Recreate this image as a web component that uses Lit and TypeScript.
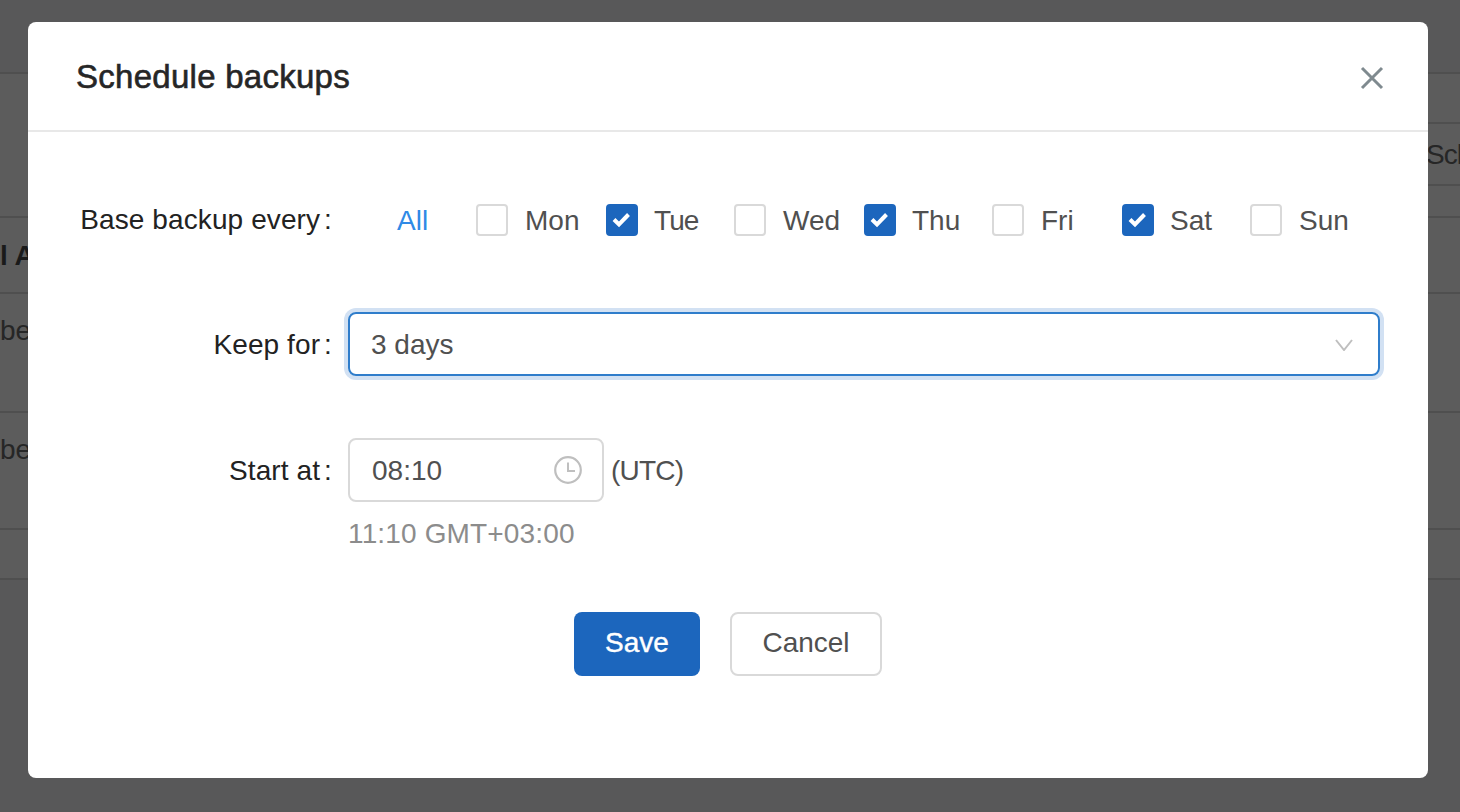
import { LitElement, html, css, svg } from "lit";
import { customElement } from "lit/decorators.js";

const DAYS: [string, boolean][] = [
  ["Mon", false], ["Tue", true], ["Wed", false], ["Thu", true],
  ["Fri", false], ["Sat", true], ["Sun", false],
];

@customElement("app-root")
export class AppRoot extends LitElement {
  static styles = css`
    :host {
      display: block;
      position: relative;
      width: 1460px;
      height: 812px;
      overflow: hidden;
      background: #585859;
      font-family: "Liberation Sans", Arial, sans-serif;
      color: #505050;
      font-size: 28px;
    }
    .page { display: flex; flex-direction: column; color: #262626; font-size: 28px; }
    .page > div { border-bottom: 2px solid #4f4f4f; background: #5c5c5c; box-sizing: border-box; overflow: hidden; white-space: nowrap; }
    .p0 { height: 74px; background: #585859 !important; }
    .page > .p1 { height: 112px; border-bottom: 0; display: flex; justify-content: flex-end; align-items: flex-end; }
    .sch { width: 38px; height: 64px; box-sizing: border-box; border-top: 2px solid #4f4f4f; border-bottom: 2px solid #4f4f4f; padding-left: 4px; letter-spacing: -1px; line-height: 62px; overflow: hidden; }
    .p2 { height: 32px; }
    .p3 { height: 76px; line-height: 76px; font-weight: 700; color: #1a1a1a; }
    .p4 { height: 119px; padding-top: 19px; line-height: 36px; }
    .p5 { height: 117px; padding-top: 19px; line-height: 36px; }
    .p6 { height: 50px; }
    .modal {
      position: absolute;
      left: 28px;
      top: 22px;
      width: 1400px;
      height: 756px;
      background: #fff;
      border-radius: 8px;
      display: flex;
      flex-direction: column;
    }
    .head {
      height: 110px;
      box-sizing: border-box;
      border-bottom: 2px solid #e8e8e8;
      padding: 0 42px 0 48px;
      display: flex;
      align-items: center;
      justify-content: space-between;
    }
    .title { font-size: 33px; font-weight: 400; letter-spacing: 0.27px; color: #262626; -webkit-text-stroke: 0.6px #262626; padding-top: 2px; }
    .close { width: 28px; height: 28px; display: block; margin-top: 4px; }
    .body { display: flex; flex-direction: column; padding-top: 64px; }
    .row { display: flex; align-items: center; }
    .label { width: 304px; flex: none; text-align: right; color: #222; white-space: nowrap; letter-spacing: 0.1px; }
    .low { padding-top: 2px; }
    .r1 { height: 48px; }
    .all { color: #2f8ae6; margin-left: 65px; width: 79px; padding-top: 2px; }
    .day { display: flex; align-items: center; }
    .box { width: 32px; height: 32px; box-sizing: border-box; border: 2px solid #d9d9d9; border-radius: 4px; background: #fff; display: block; }
    .box.on { background: #1c66bd; border-color: #1c66bd; }
    .day span { margin-left: 17px; padding-top: 2px; }
    .day.checked span { margin-left: 16px; }
    .day span.tight { letter-spacing: -0.9px; }
    .colon { margin-left: 4px; }
    .r2 { margin-top: 70px; height: 60px; }
    .select {
      margin-left: 16px;
      width: 1032px;
      height: 64px;
      box-sizing: border-box;
      border: 2px solid #2f7dcb;
      border-radius: 8px;
      box-shadow: 0 0 0 4px #d2e1f3;
      padding: 0 25px 0 21px;
      display: flex;
      align-items: center;
      justify-content: space-between;
    }
    .chev { width: 18px; height: 12px; display: block; padding-top: 1px; }
    .r3 { margin-top: 64px; height: 64px; }
    .time {
      margin-left: 16px;
      width: 256px;
      height: 64px;
      box-sizing: border-box;
      border: 2px solid #d9d9d9;
      border-radius: 8px;
      padding: 0 20px 0 22px;
      display: flex;
      align-items: center;
      justify-content: space-between;
    }
    .clock { width: 28px; height: 28px; display: block; }
    .utc { margin-left: 7px; letter-spacing: -0.8px; padding-top: 2px; }
    .hint { margin: 14px 0 0 320px; color: #8c8c8c; line-height: 36px; letter-spacing: 0.15px; }
    .actions { display: flex; justify-content: center; gap: 30px; margin-top: 60px; }
    .btn { height: 64px; box-sizing: border-box; border-radius: 8px; display: flex; align-items: center; justify-content: center; padding-bottom: 2px; }
    .save { width: 126px; background: #1c66bd; color: #fff; -webkit-text-stroke: 0.4px #fff; }
    .cancel { width: 152px; border: 2px solid #d9d9d9; background: #fff; }
  `;

  private box(on: boolean) {
    return html`<svg class="box ${on ? "on" : ""}" viewBox="0 0 28 28">${on
      ? svg`<path d="M6 13.5l5 5 9.5-10" fill="none" stroke="#fff" stroke-width="4"/>`
      : ""}</svg>`;
  }

  render() {
    return html`
      <div class="page">
        <div class="p0"></div>
        <div class="p1"><div class="sch">Sch</div></div>
        <div class="p2"></div>
        <div class="p3">l A</div>
        <div class="p4">be</div>
        <div class="p5">be</div>
        <div class="p6"></div>
      </div>
      <div class="modal">
        <div class="head">
          <div class="title">Schedule backups</div>
          <svg class="close" viewBox="0 0 28 28"><path d="M4 4l20 20M24 4L4 24" stroke="#7f8a8f" stroke-width="3" fill="none"/></svg>
        </div>
        <div class="body">
          <div class="row r1">
            <div class="label">Base backup every<span class="colon">:</span></div>
            <div class="all">All</div>
            ${DAYS.map(([d, on], i) => html`<div class="day ${on ? "checked" : ""}" style="width:${[130, 128, 130, 128, 130, 128, 110][i]}px">${this.box(on)}<span class="${d === "Tue" ? "tight" : ""}">${d}</span></div>`)}
          </div>
          <div class="row r2">
            <div class="label low">Keep for<span class="colon">:</span></div>
            <div class="select"><span class="low">3 days</span>
              <svg class="chev" viewBox="0 0 18 12"><path d="M1 1l8 10 8-10" stroke="#bfbfbf" stroke-width="2" fill="none"/></svg>
            </div>
          </div>
          <div class="row r3">
            <div class="label low">Start at<span class="colon">:</span></div>
            <div class="time"><span class="low">08:10</span>
              <svg class="clock" viewBox="0 0 28 28"><circle cx="14" cy="14" r="12.8" stroke="#bfbfbf" stroke-width="2.2" fill="none"/><path d="M14 6.5V15h7" stroke="#bfbfbf" stroke-width="2" fill="none"/></svg>
            </div>
            <div class="utc">(UTC)</div>
          </div>
          <div class="hint">11:10 GMT+03:00</div>
          <div class="actions">
            <div class="btn save">Save</div>
            <div class="btn cancel">Cancel</div>
          </div>
        </div>
      </div>
    `;
  }
}
